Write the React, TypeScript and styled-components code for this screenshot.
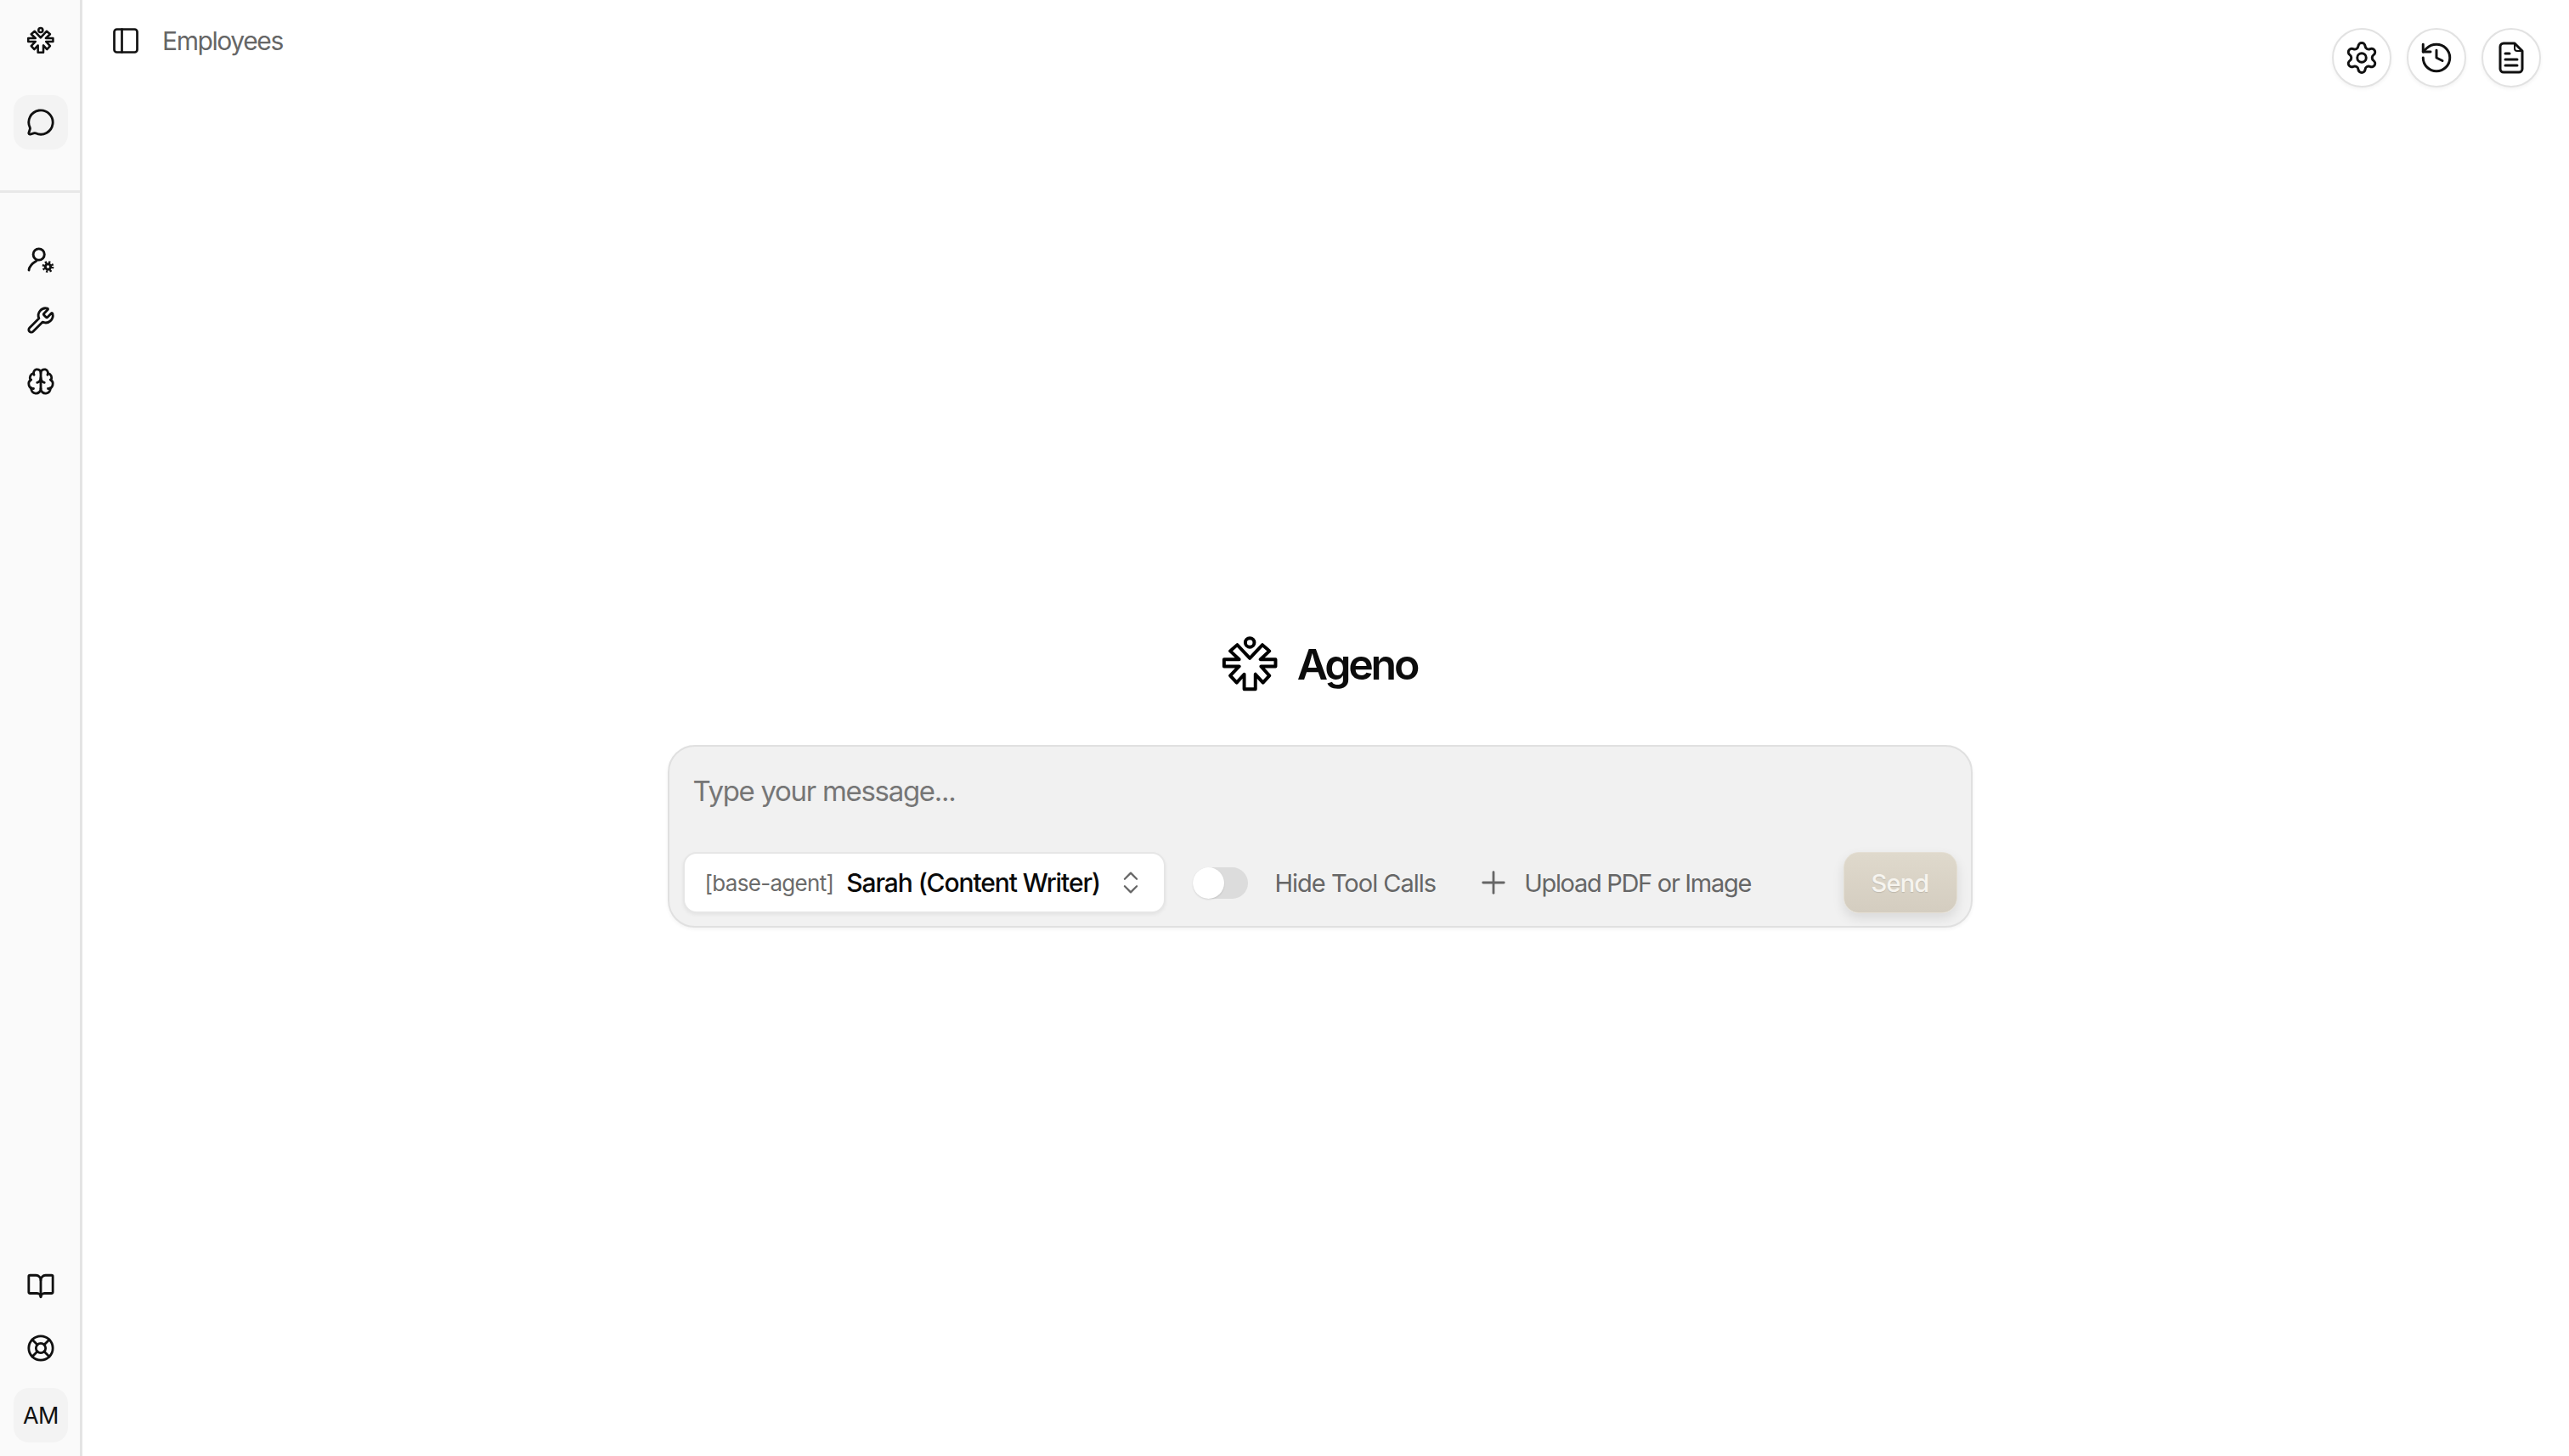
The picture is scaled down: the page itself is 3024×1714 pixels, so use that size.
import React from 'react'
import styled, { createGlobalStyle } from 'styled-components'
import {
  BookOpen,
  Brain,
  ChevronsUpDown,
  History,
  LifeBuoy,
  MessageCircle,
  PanelLeft,
  Plus,
  Settings,
  Wrench,
} from 'lucide-react'

const GlobalStyle = createGlobalStyle`
  html, body {
    margin: 0;
    height: 100%;
    background: #fff;
    overflow: hidden;
    font-family: Inter, "Liberation Sans", sans-serif;
  }
  #root {
    height: 100%;
  }
  * {
    box-sizing: border-box;
  }
`

const Page = styled.div`
  display: flex;
  height: 100vh;
`

const Sidebar = styled.aside`
  display: flex;
  flex-direction: column;
  align-items: stretch;
  width: 97px;
  flex-shrink: 0;
  background: #fafafa;
  border-right: 3px solid #e4e4e4;
  padding: 16px 0;
`

const RailGroup = styled.div`
  display: flex;
  flex-direction: column;
  align-items: center;
  gap: 8px;
  padding-left: 2px;
`

const TopGroup = styled(RailGroup)`
  gap: 32px;
  padding-bottom: 48px;
  border-bottom: 3px solid #e8e8e8;
`

const MiddleGroup = styled(RailGroup)`
  padding-top: 46px;
`

const BottomGroup = styled(RailGroup)`
  margin-top: auto;
  gap: 9px;
`

const RailButton = styled.div<{ $active?: boolean }>`
  display: flex;
  align-items: center;
  justify-content: center;
  width: 64px;
  height: 64px;
  border-radius: 18px;
  color: #111;
  background: ${p => (p.$active ? '#f3f3f3' : 'transparent')};
`

const Avatar = styled(RailButton)`
  margin-top: 6px;
  font-size: 27px;
  font-weight: 400;
  letter-spacing: -0.5px;
`

const Main = styled.main`
  flex: 1;
  display: flex;
  flex-direction: column;
  min-width: 0;
`

const Header = styled.header`
  display: flex;
  justify-content: space-between;
  align-items: flex-start;
  padding: 33px 33px 0 33px;
`

const Crumb = styled.div`
  display: flex;
  align-items: center;
  gap: 25px;
  height: 30px;
  color: #111;
`

const CrumbLabel = styled.span`
  font-size: 30px;
  letter-spacing: -1.4px;
  color: #666;
`

const Actions = styled.div`
  display: flex;
  gap: 18px;
`

const RoundButton = styled.div`
  display: flex;
  align-items: center;
  justify-content: center;
  width: 70px;
  height: 70px;
  border-radius: 50%;
  border: 2px solid #e2e2e2;
  background: #fff;
  box-shadow: 0 2px 4px rgba(0, 0, 0, 0.05);
  color: #111;
`

const Center = styled.section`
  display: flex;
  flex-direction: column;
  align-items: center;
  padding: 646px 14px 0 0;
`

const Brand = styled.div`
  display: flex;
  align-items: center;
  gap: 14px;
  height: 66px;
  margin: 0 9px 62px 0;
`

const BrandName = styled.h1`
  margin: 0;
  font-size: 50px;
  font-weight: 600;
  letter-spacing: -3.2px;
  color: #0c0c0c;
`

const Composer = styled.div`
  display: flex;
  flex-direction: column;
  width: 1536px;
  height: 215px;
  padding: 0 16px;
  border: 2px solid #e0e0e0;
  border-radius: 32px;
  background: #f1f1f1;
  box-shadow: 0 2px 4px rgba(0, 0, 0, 0.05);
`

const Placeholder = styled.div`
  height: 124px;
  padding: 32px 0 0 12px;
  font-size: 33px;
  line-height: 40px;
  letter-spacing: -1.3px;
  color: #767676;
`

const Controls = styled.div`
  display: flex;
  align-items: center;
  height: 72px;
`

const AgentSelect = styled.div`
  display: flex;
  align-items: center;
  width: 568px;
  height: 72px;
  padding: 0 22px 0 24px;
  background: #fff;
  border: 2px solid #e6e6e6;
  border-radius: 16px;
  box-shadow: 0 2px 4px rgba(0, 0, 0, 0.06);
`

const AgentTag = styled.span`
  font-size: 26px;
  letter-spacing: -0.7px;
  color: #6b6b6b;
  margin-right: 15px;
`

const AgentName = styled.span`
  font-size: 30px;
  font-weight: 500;
  letter-spacing: -1.1px;
  color: #0a0a0a;
`

const SelectChevrons = styled(ChevronsUpDown)`
  margin-left: auto;
  color: #666;
`

const Toggle = styled.div`
  display: flex;
  align-items: center;
  width: 65px;
  height: 37px;
  margin-left: 32px;
  border-radius: 19px;
  background: #dcdcdc;
`

const ToggleThumb = styled.span`
  width: 37px;
  height: 37px;
  border-radius: 50%;
  background: #fff;
  box-shadow: 0 1px 2px rgba(0, 0, 0, 0.12);
`

const ControlLabel = styled.span`
  font-size: 29px;
  letter-spacing: -1px;
  color: #666;
`

const UploadLabel = styled(ControlLabel)`
  letter-spacing: -1.3px;
`

const ToggleLabel = styled(ControlLabel)`
  margin-left: 32px;
`

const UploadButton = styled.div`
  display: flex;
  align-items: center;
  gap: 15px;
  margin-left: 47px;
  color: #666;
`

const SendButton = styled.div`
  display: flex;
  align-items: center;
  justify-content: center;
  width: 134px;
  height: 72px;
  margin-left: auto;
  border: 1px solid #e4dfd4;
  border-radius: 18px;
  background: linear-gradient(#dfd9cc, #d4cdc0);
  box-shadow: 0 6px 14px rgba(0, 0, 0, 0.1);
  color: #f6f4ef;
  font-size: 29px;
  font-weight: 500;
  letter-spacing: -0.8px;
  text-shadow: 0 1px 1px rgba(0, 0, 0, 0.12);
`

const AgenoMark: React.FC<{ size: number }> = ({ size }) => {
  const stroke = size > 50 ? 12 : 16
  return (
    <svg width={size} height={size} viewBox="0 0 252 252" fill="none" stroke="currentColor" strokeLinejoin="round">
      <path
        d="M125 103L170 55L195 77L163 107H217V132H165L195 165L172 190L145 160V213H105V160L78 190L55 165L87 132H33V107H87L55 77L80 55Z"
        strokeWidth={stroke}
      />
      <circle cx="125" cy="47" r="16" strokeWidth={stroke} />
    </svg>
  )
}

const UserGear: React.FC = () => (
  <svg width="34" height="34" viewBox="0 0 34 34" fill="none" stroke="currentColor" strokeWidth="2.9" strokeLinecap="round">
    <circle cx="14.7" cy="11.5" r="6.6" />
    <path d="M3 30c.5-4.5 4-8 9-11" />
    <circle cx="25.5" cy="26" r="3.2" strokeWidth="3" />
    <circle cx="25.5" cy="26" r="5.6" strokeWidth="2.6" strokeDasharray="2.2 2.2" strokeLinecap="butt" />
  </svg>
)

const DocIcon: React.FC = () => (
  <svg width="30" height="38" viewBox="0 0 30 38" fill="none" stroke="currentColor" strokeWidth="3" strokeLinecap="round" strokeLinejoin="round">
    <path d="M6 2h13l9 9v21a4 4 0 0 1-4 4H6a4 4 0 0 1-4-4V6a4 4 0 0 1 4-4z" />
    <path d="M19 2v6a3 3 0 0 0 3 3h6" strokeWidth="2" />
    <path d="M8 14h5M8 21h14M8 28h14" />
  </svg>
)

const App: React.FC = () => (
  <Page>
    <GlobalStyle />
    <Sidebar>
      <TopGroup>
        <RailButton>
          <AgenoMark size={40} />
        </RailButton>
        <RailButton $active>
          <MessageCircle size={34} />
        </RailButton>
      </TopGroup>
      <MiddleGroup>
        <RailButton>
          <UserGear />
        </RailButton>
        <RailButton>
          <Wrench size={34} />
        </RailButton>
        <RailButton>
          <Brain size={34} />
        </RailButton>
      </MiddleGroup>
      <BottomGroup>
        <RailButton>
          <BookOpen size={34} />
        </RailButton>
        <RailButton>
          <LifeBuoy size={34} />
        </RailButton>
        <Avatar $active>AM</Avatar>
      </BottomGroup>
    </Sidebar>
    <Main>
      <Header>
        <Crumb>
          <PanelLeft size={36} strokeWidth={1.8} />
          <CrumbLabel>Employees</CrumbLabel>
        </Crumb>
        <Actions>
          <RoundButton>
            <Settings size={42} strokeWidth={1.7} />
          </RoundButton>
          <RoundButton>
            <History size={42} strokeWidth={1.7} />
          </RoundButton>
          <RoundButton>
            <DocIcon />
          </RoundButton>
        </Actions>
      </Header>
      <Center>
        <Brand>
          <AgenoMark size={83} />
          <BrandName>Ageno</BrandName>
        </Brand>
        <Composer>
          <Placeholder>Type your message...</Placeholder>
          <Controls>
            <AgentSelect>
              <AgentTag>[base-agent]</AgentTag>
              <AgentName>Sarah (Content Writer)</AgentName>
              <SelectChevrons size={34} strokeWidth={1.6} />
            </AgentSelect>
            <Toggle>
              <ToggleThumb />
            </Toggle>
            <ToggleLabel>Hide Tool Calls</ToggleLabel>
            <UploadButton>
              <Plus size={42} strokeWidth={1.6} />
              <UploadLabel>Upload PDF or Image</UploadLabel>
            </UploadButton>
            <SendButton>Send</SendButton>
          </Controls>
        </Composer>
      </Center>
    </Main>
  </Page>
)

export default App
